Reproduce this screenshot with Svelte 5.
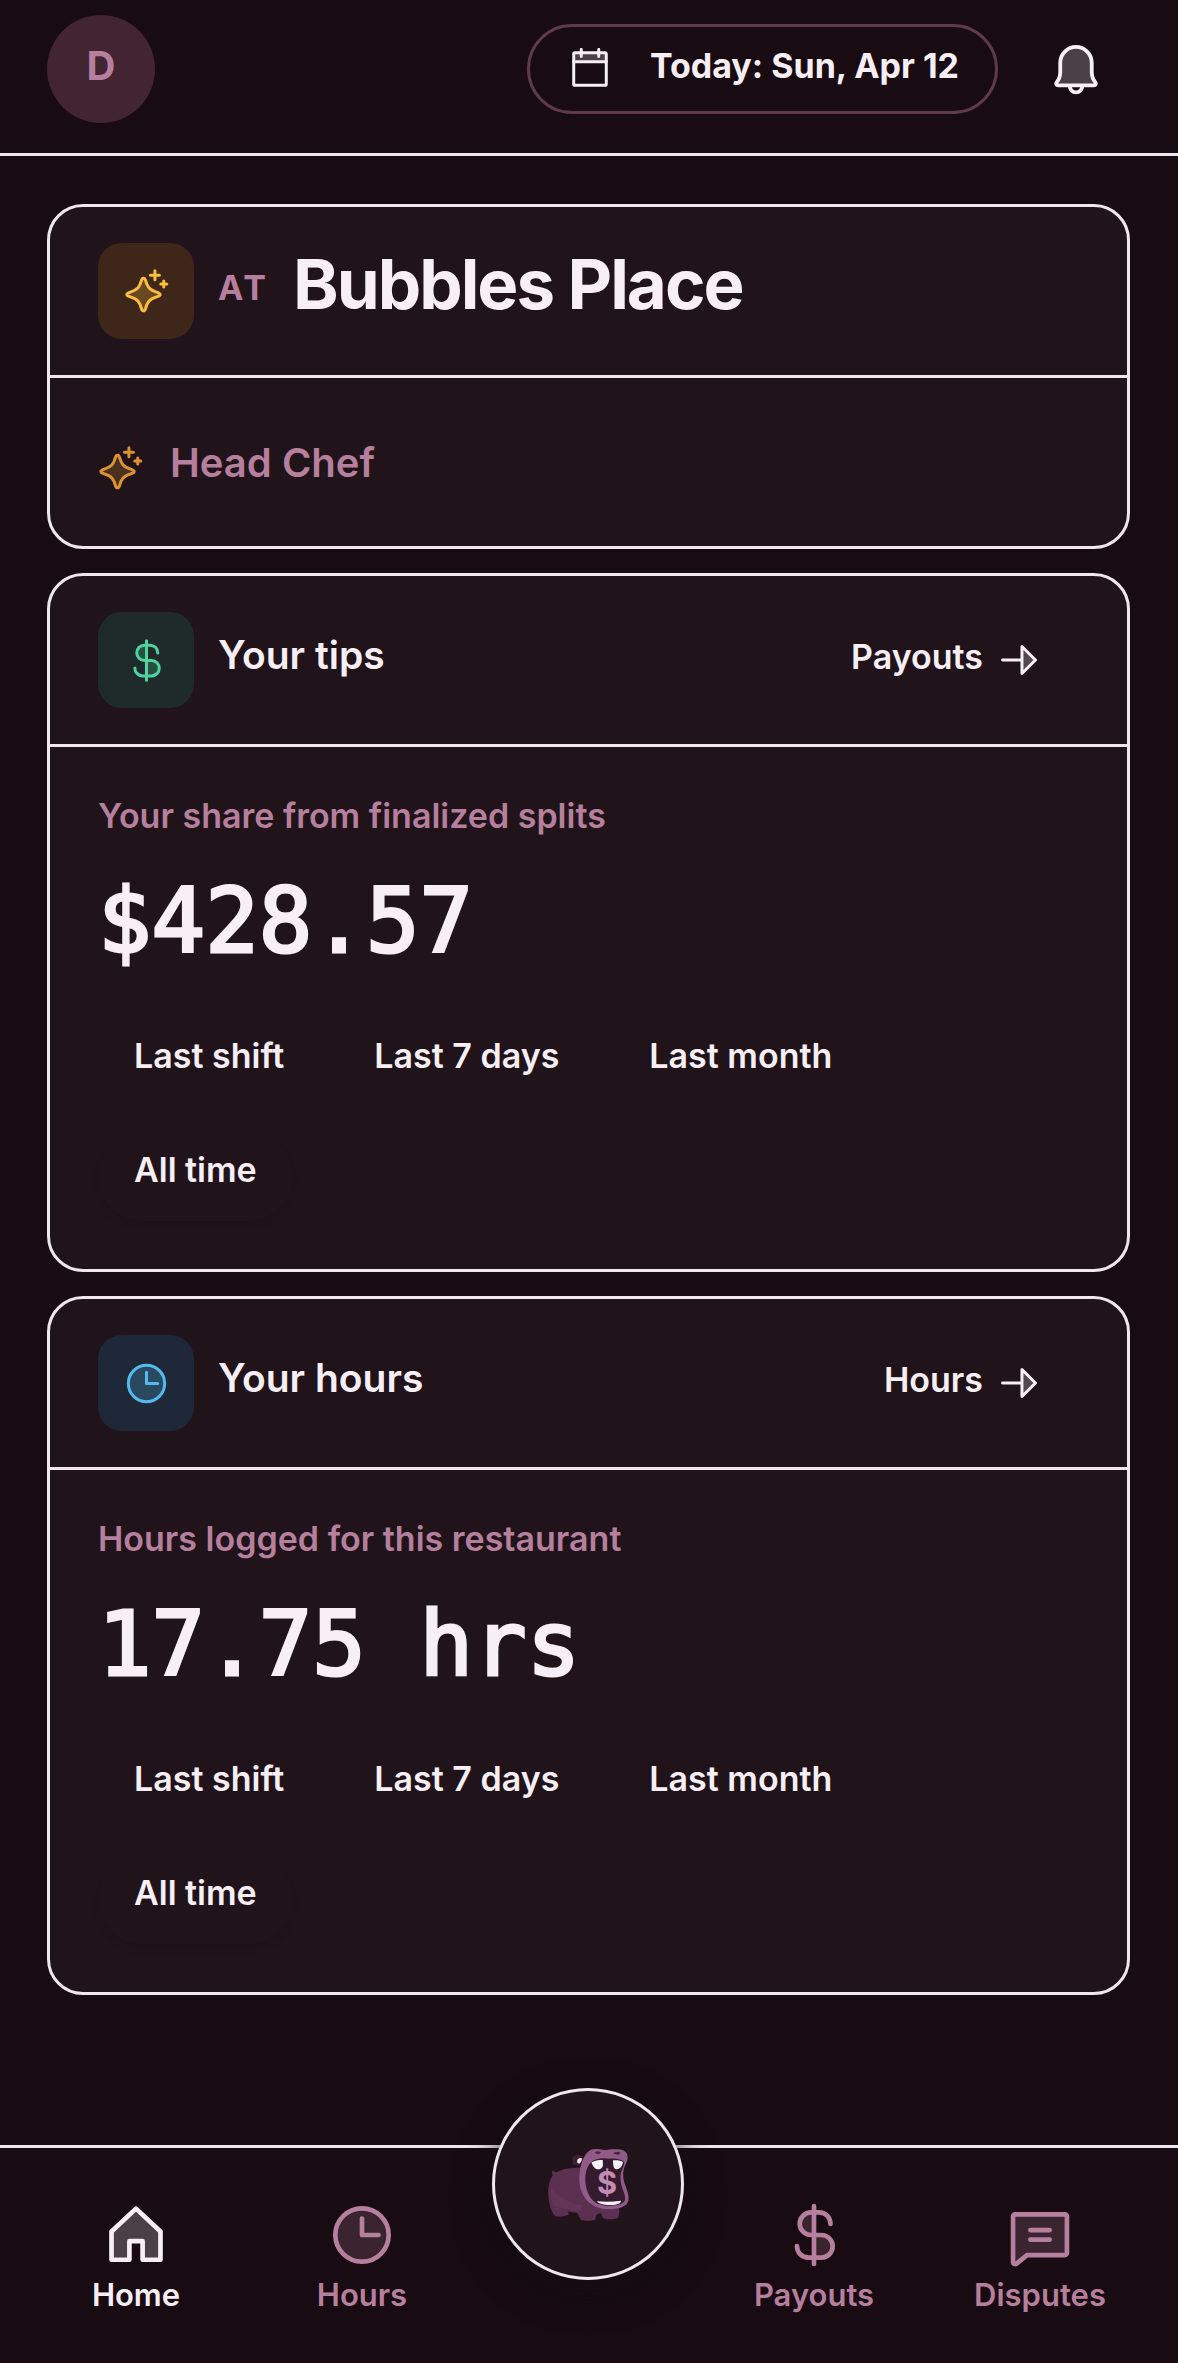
<script lang="ts">
  type Stat = {
    title: string;
    icon: string;
    tone: string;
    link: string;
    caption: string;
    value: string;
  };

  const ranges = ['Last shift', 'Last 7 days', 'Last month', 'All time'];

  const stats: Stat[] = [
    {
      title: 'Your tips',
      icon: 'dollar',
      tone: 'green',
      link: 'Payouts',
      caption: 'Your share from finalized splits',
      value: '$428.57',
    },
    {
      title: 'Your hours',
      icon: 'clock',
      tone: 'blue',
      link: 'Hours',
      caption: 'Hours logged for this restaurant',
      value: '17.75 hrs',
    },
  ];

  const leftNav = [
    { label: 'Home', icon: 'home', active: true },
    { label: 'Hours', icon: 'clock', active: false },
  ];
  const rightNav = [
    { label: 'Payouts', icon: 'dollar', active: false },
    { label: 'Disputes', icon: 'message', active: false },
  ];

  let selected: Record<string, string> = $state({});
</script>

{#snippet icon(name: string)}
  <svg class="icon" viewBox="0 0 24 24" aria-hidden="true">
    {#if name === 'calendar'}
      <path class="tint" d="M2.7 2.7h18.6v5H2.7z" />
      <rect x="2.7" y="2.7" width="18.6" height="18.6" rx=".8" />
      <path d="M2.7 7.8h18.6M7 .8v4M17 .8v4" />
    {:else if name === 'bell'}
      <path class="tint" d="M5 9.2a7 7 0 0 1 14 0v4c0 2 .4 3.2 1.4 4.4.8 1 .4 1.7-.6 1.7H4.2c-1 0-1.4-.7-.6-1.7 1-1.2 1.4-2.4 1.4-4.4z" />
      <path d="M5 9.2a7 7 0 0 1 14 0v4c0 2 .4 3.2 1.4 4.4.8 1 .4 1.7-.6 1.7H4.2c-1 0-1.4-.7-.6-1.7 1-1.2 1.4-2.4 1.4-4.4zM9.2 19.6a2.8 2.8 0 0 0 5.6 0" />
    {:else if name === 'sparkles'}
      <path class="tint" d="M10.4 4.9c.7 0 .9.5 1.1 1.2.9 3.4 1.9 5 5.9 6.2 1.3.4 1.9.7 1.9 1.3s-.6.9-1.9 1.3c-4 1.2-5 2.8-5.9 6.2-.2.7-.4 1.2-1.1 1.2s-.9-.5-1.1-1.2c-.9-3.4-1.9-5-5.9-6.2-1.3-.4-1.9-.7-1.9-1.3s.6-.9 1.9-1.3c4-1.2 5-2.8 5.9-6.2.2-.7.4-1.2 1.1-1.2z" />
      <path d="M10.4 4.9c.7 0 .9.5 1.1 1.2.9 3.4 1.9 5 5.9 6.2 1.3.4 1.9.7 1.9 1.3s-.6.9-1.9 1.3c-4 1.2-5 2.8-5.9 6.2-.2.7-.4 1.2-1.1 1.2s-.9-.5-1.1-1.2c-.9-3.4-1.9-5-5.9-6.2-1.3-.4-1.9-.7-1.9-1.3s.6-.9 1.9-1.3c4-1.2 5-2.8 5.9-6.2.2-.7.4-1.2 1.1-1.2z" />
      <path d="M16.5.9v4.8M14.1 3.3h4.8M21.200 6.400v3.200M19.600 8h3.200" />
    {:else if name === 'dollar'}
      <path class="tint" d="M12 3.8h-1.100a4.100 4.100 0 0 0 0 8.200H12zM12 12h2.700a4.100 4.100 0 0 1 0 8.200H12z" />
      <path d="M12 1.5v21M18 8c0-2.500-1.800-4.200-4.200-4.200h-2.900a4.100 4.100 0 0 0 0 8.200h3.800a4.100 4.100 0 0 1 0 8.200H10c-2.400 0-4.200-1.800-4.200-4.200" />
    {:else if name === 'clock'}
      <circle class="tint" cx="12" cy="12" r="9.7" />
      <circle cx="12" cy="12" r="9.7" />
      <path d="M12 6v6h6" />
    {:else if name === 'arrow'}
      <path class="tint" d="M13.7 4.3v15.4l7.7-7.7z" />
      <path d="M2.6 12h11.1M13.7 4.3v15.4l7.7-7.7z" />
    {:else if name === 'home'}
      <path class="tint" d="M12 2.4 3.1 10.7V21h6.5v-6.8h4.8V21h6.5V10.7z" />
      <path d="M12 2.4 3.1 10.7V21h6.5v-6.8h4.8V21h6.5V10.7z" />
    {:else if name === 'message'}
      <path class="tint" d="M3 4.5h18a.8.8 0 0 1 .8.8v13.2a.8.8 0 0 1-.8.8H7.3l-3.7 3c-.6.5-1.4.2-1.4-.6V5.3a.8.8 0 0 1 .8-.8z" />
      <path d="M3 4.5h18a.8.8 0 0 1 .8.8v13.2a.8.8 0 0 1-.8.8H7.3l-3.7 3c-.6.5-1.4.2-1.4-.6V5.3a.8.8 0 0 1 .8-.8zM8.5 10.2h7M8.5 13.7h7" />
    {/if}
  </svg>
{/snippet}

{#snippet navItem(item: { label: string; icon: string; active: boolean })}
  <a class="nav-item" class:active={item.active} href="#{item.label.toLowerCase()}">
    {@render icon(item.icon)}
    <span>{item.label}</span>
  </a>
{/snippet}

<div class="page">
  <header class="topbar">
    <button class="avatar" aria-label="Account"><span>D</span></button>
    <div class="topbar-actions">
      <button class="date-pill">
        {@render icon('calendar')}
        <span>Today: Sun, Apr 12</span>
      </button>
      <button class="bell" aria-label="Notifications">
        {@render icon('bell')}
      </button>
    </div>
  </header>

  <main>
    <section class="card">
      <div class="card-head">
        <div class="tile amber">{@render icon('sparkles')}</div>
        <span class="at">AT</span>
        <h1>Bubbles Place</h1>
      </div>
      <div class="role">
        {@render icon('sparkles')}
        <span>Head Chef</span>
      </div>
    </section>

    {#each stats as stat}
      <section class="card">
        <div class="card-head">
          <div class="tile {stat.tone}">{@render icon(stat.icon)}</div>
          <h2>{stat.title}</h2>
          <a class="more" href="#{stat.link.toLowerCase()}">
            <span>{stat.link}</span>
            {@render icon('arrow')}
          </a>
        </div>
        <div class="card-body">
          <p class="caption">{stat.caption}</p>
          <p class="value">{stat.value}</p>
          <div class="ranges">
            {#each ranges as range}
              <button
                class="range"
                class:last={range === 'All time'}
                aria-pressed={selected[stat.title] === range}
                onclick={() => (selected[stat.title] = range)}
              >
                {range}
              </button>
            {/each}
          </div>
        </div>
      </section>
    {/each}
  </main>

  <nav class="tabbar">
    {#each leftNav as item}
      {@render navItem(item)}
    {/each}
    <button class="mascot" aria-label="Open menu">
      <svg viewBox="255 260 255 225" aria-hidden="true">
        <path fill="#5b3050" d="M274 331c4 2 8 3 13 5 14-9 32-13 52-13l50-5 60 80 25 45c3 14-1 22-3 30-12 5-34 5-44 1-4-5-4-10-7-15-7 0-12 3-15 7l-2 12c-14 4-34 4-44 0-4-6-6-13-10-19-8-3-20-3-31-6 5 6 7 9 3 11l-14 4c-8 1-18 1-26-2-9-10-12-21-15-34-5-20-6-41-2-60 2-11 6-19 12-27-3-5-4-9-2-14z" />
        <path fill="#643556" d="M268 380c15 24 50 48 96 54l-10 20c-26-8-60-8-76-18-8-15-11-35-10-56z" />
        <path fill="#3b2035" d="M337 313c-5-12-4-25 7-28 11-3 24 4 26 12l-14 18z" />
        <path fill="#f6ecf4" d="M349 307c-2-9 3-15 13-14 2 5-1 11-7 17z" />
        <path fill="#925a88" d="M381 274c10-9 26-9 45-6 12 2 19-1 31-1 20-2 39 2 42 17 3 11-1 22-7 32-9 21-6 40 2 62 4 12 9 24 9 35 0 21-17 31-47 33-32 3-62-7-80-28-15-18-22-40-21-67 1-29 9-61 26-77z" />
        <path fill="#341b2e" d="M388 307c17-15 38-15 57-12 17-2 31 0 42 8 6 6 0 16-4 25-7 18-5 36 1 55 4 13 10 24 8 36-4 12-22 17-45 17-26 1-48-7-60-27-18-29-20-77 1-102z" />
        <path fill="#f9f1f8" d="M391 307c10-7 20-8 34-8l1 14c-1 10-7 14-15 14-10-1-14-9-20-20zM456 300c12-1 23 0 30 5-2 13-9 21-20 22-8-1-10-10-10-27z" />
        <path fill="#f9f1f8" d="M407 423c25 2 48 2 73-2 0 8-9 12-31 13-19 1-34-2-42-11z" />
        <path fill="#472640" d="M401 278c5-5 14-6 19-1l-7 5zM457 280c4-7 16-8 22-2l-7 5z" />
        <text x="438" y="401" text-anchor="middle">$</text>
      </svg>
    </button>
    {#each rightNav as item}
      {@render navItem(item)}
    {/each}
  </nav>
</div>

<style>
  :global(body) {
    margin: 0;
    background: #180b12;
  }

  .page {
    --bg: #180b12;
    --surface: #20141a;
    --line: #f0e6ee;
    --text: #f8eff6;
    --muted: #b57f9d;
    display: flex;
    flex-direction: column;
    min-height: 100vh;
    background: var(--bg);
    color: var(--text);
    font-family: Inter, "Liberation Sans", sans-serif;
    font-size: 34px;
    font-weight: 600;
    line-height: 42px;
  }

  button {
    padding: 0;
    border: none;
    background: none;
    color: inherit;
    font: inherit;
    cursor: pointer;
  }

  a {
    color: inherit;
    text-decoration: none;
  }

  h1,
  h2,
  p {
    margin: 0;
  }

  .icon {
    flex-shrink: 0;
    width: 42px;
    height: 42px;
    fill: none;
    stroke: currentColor;
    stroke-width: 1.7;
    stroke-linecap: round;
    stroke-linejoin: round;
  }

  .icon .tint {
    fill: currentColor;
    fill-opacity: 0.22;
    stroke: none;
  }

  /* top bar */
  .topbar {
    display: flex;
    align-items: flex-start;
    justify-content: space-between;
    padding: 15px 48px 30px 47px;
    border-bottom: 3px solid var(--line);
  }

  .avatar {
    width: 108px;
    height: 108px;
    border-radius: 50%;
    background: #422433;
    color: var(--muted);
    font-size: 40px;
    font-weight: 700;
  }

  .avatar span,
  .date-pill span,
  .more span,
  .at {
    padding-bottom: 6px;
  }

  .avatar span {
    display: block;
  }

  .topbar-actions {
    display: flex;
    align-items: center;
    gap: 24px;
  }

  .date-pill {
    display: flex;
    align-items: center;
    gap: 39px;
    height: 90px;
    padding: 0 36px 0 39px;
    border: 3px solid #5e3a4c;
    border-radius: 45px;
    font-size: 34px;
    font-weight: 700;
  }

  .date-pill .tint,
  .bell .tint,
  .more .tint,
  .active .tint {
    fill: #fff;
  }

  .bell {
    display: flex;
    align-items: center;
    justify-content: center;
    width: 108px;
    height: 108px;
  }

  .bell .icon {
    width: 54px;
    height: 54px;
  }

  /* cards */
  main {
    display: flex;
    flex: 1;
    flex-direction: column;
    gap: 24px;
    padding: 48px 48px 150px 47px;
  }

  .card {
    border: 3px solid var(--line);
    border-radius: 36px;
    background: var(--surface);
  }

  .card-head {
    display: flex;
    align-items: center;
    gap: 24px;
    padding: 36px 48px;
    border-bottom: 3px solid var(--line);
  }

  .tile {
    display: flex;
    align-items: center;
    justify-content: center;
    width: 96px;
    height: 96px;
    border-radius: 24px;
  }

  .tile .icon,
  .role .icon {
    width: 45px;
    height: 45px;
    stroke-width: 1.6;
  }

  .amber {
    background: #3e2719;
    color: #f9bd3f;
  }

  .green {
    background: #1f2a2a;
    color: #4fd3a0;
  }

  .blue {
    background: #1f2839;
    color: #54b9ee;
  }

  .at {
    color: var(--muted);
    font-weight: 700;
    letter-spacing: 3px;
  }

  h1 {
    padding-bottom: 15px;
    font-size: 69px;
    font-weight: 700;
    line-height: 72px;
    letter-spacing: -2px;
  }

  h2 {
    padding-bottom: 10px;
    font-size: 39px;
    font-weight: 600;
  }

  .role {
    display: flex;
    align-items: center;
    gap: 27px;
    padding: 64px 48px 52px;
    color: var(--muted);
    font-size: 40px;
  }

  .role span {
    padding-bottom: 10px;
  }

  .role .icon {
    color: #dc9433;
  }

  .more {
    display: flex;
    align-items: center;
    gap: 15px;
    margin-left: auto;
    padding-right: 39px;
  }

  .card-body {
    padding: 48px;
  }

  .caption {
    color: var(--muted);
  }

  .value {
    padding: 30px 0 42px;
    font-family: "DejaVu Sans Mono", monospace;
    font-size: 89px;
    font-weight: 400;
    line-height: 108px;
    -webkit-text-stroke: 3px currentColor;
  }

  .ranges {
    display: flex;
    flex-wrap: wrap;
    gap: 24px 18px;
  }

  .range {
    height: 90px;
    padding: 0 36px 12px;
    border-radius: 45px;
  }

  .last {
    box-shadow: 0 6px 6px -3px #1d1217;
  }

  /* bottom tabs */
  .tabbar {
    display: grid;
    grid-template-columns: repeat(5, 1fr);
    justify-items: center;
    height: 215px;
    padding: 0 25px 0 23px;
    border-top: 3px solid var(--line);
  }

  .nav-item {
    display: flex;
    flex-direction: column;
    align-items: center;
    gap: 6px;
    padding-top: 54px;
    color: var(--muted);
    font-size: 31px;
  }

  .nav-item .icon {
    width: 66px;
    height: 66px;
  }

  .nav-item.active {
    color: var(--text);
  }

  .mascot {
    display: flex;
    align-items: center;
    justify-content: center;
    width: 192px;
    height: 192px;
    margin-top: -60px;
    border: 3px solid var(--line);
    border-radius: 50%;
    background: var(--surface);
    box-shadow: 0 12px 36px #140c10;
  }

  .mascot svg {
    width: 85px;
    height: 75px;
  }

  .mascot text {
    fill: #c58bb5;
    font: 700 92px Inter, sans-serif;
  }
</style>
